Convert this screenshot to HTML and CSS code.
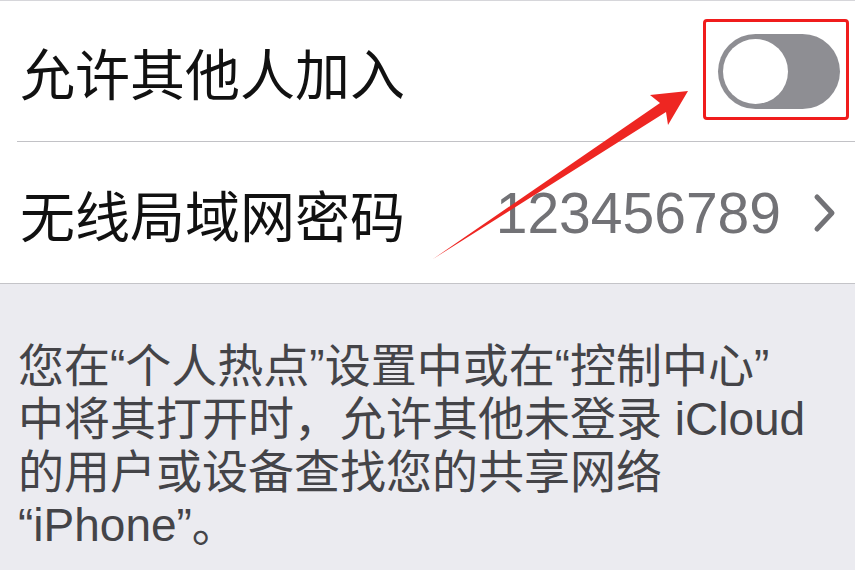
FILE: index.html
```html
<!DOCTYPE html>
<html lang="zh-CN">
<head>
    <meta charset="UTF-8">
    <title>个人热点</title>
    <link rel="stylesheet" href="styles.css">
</head>
<body>
    <div class="group">
        <div class="row">
            <div class="label">允许其他人加入</div>
            <div class="mark">
                <div class="switch"><span class="knob"></span></div>
            </div>
        </div>
        <div class="row">
            <div class="label">无线局域网密码</div>
            <div class="value">123456789</div>
            <svg class="chevron" width="24" height="40" viewBox="0 0 24 40">
                <path d="M4 4 L19 20 L4 36" fill="none" stroke="#727276" stroke-width="5" stroke-linecap="round" stroke-linejoin="round"/>
            </svg>
        </div>
    </div>
    <p class="note">您在“个人热点”设置中或在“控制中心”<br>中将其打开时，允许其他未登录 iCloud<br>的用户或设备查找您的共享网络<br>“iPhone”。</p>

    <!-- red pointer arrow -->
    <svg class="arrow" width="855" height="570" viewBox="0 0 855 570">
        <polygon points="433,259 660,103 650,95 688,91 668,125 666,112" fill="#ee2622"/>
    </svg>
</body>
</html>
```

FILE: styles.css
```css
body {
    margin: 0;
    width: 855px;
    height: 570px;
    overflow: hidden;
    background: #ebebf0;
    font-family: "Liberation Sans", "Noto Sans CJK SC", sans-serif;
    position: relative;
}
.group {
    background: #fff;
    border-top: 1px solid #d6d6da;
    border-bottom: 1px solid #c4c4c8;
}
.row {
    display: flex;
    align-items: center;
    height: 140px;
    padding-left: 20px;
}
.row + .row {
    height: 141px;
    border-top: 1px solid #c2c2c6;
    margin-left: 17px;
    padding-left: 3px;
}
.label {
    flex-grow: 1;
    font-family: "Noto Sans CJK SC", sans-serif;
    font-size: 55px;
    color: #111;
}
.value {
    font-size: 57px;
    color: #727276;
    margin-right: 32px;
}
.chevron {
    margin-right: 18px;
}
.mark {
    border: 3px solid #f01c1c;
    border-radius: 4px;
    padding: 12px 6px 8px 12px;
    margin-right: 6px;
    margin-bottom: 4px;
}
.switch {
    width: 122px;
    height: 75px;
    border-radius: 38px;
    background: #8e8e93;
    box-sizing: border-box;
    padding: 5px;
}
.knob {
    display: block;
    width: 65px;
    height: 65px;
    border-radius: 50%;
    background: #fff;
}
.note {
    margin: 0;
    padding: 56px 0 0 18px;
    font-size: 46px;
    line-height: 53px;
    color: #444448;
}
.arrow {
    position: absolute;
    left: 0;
    top: 0;
}
```
